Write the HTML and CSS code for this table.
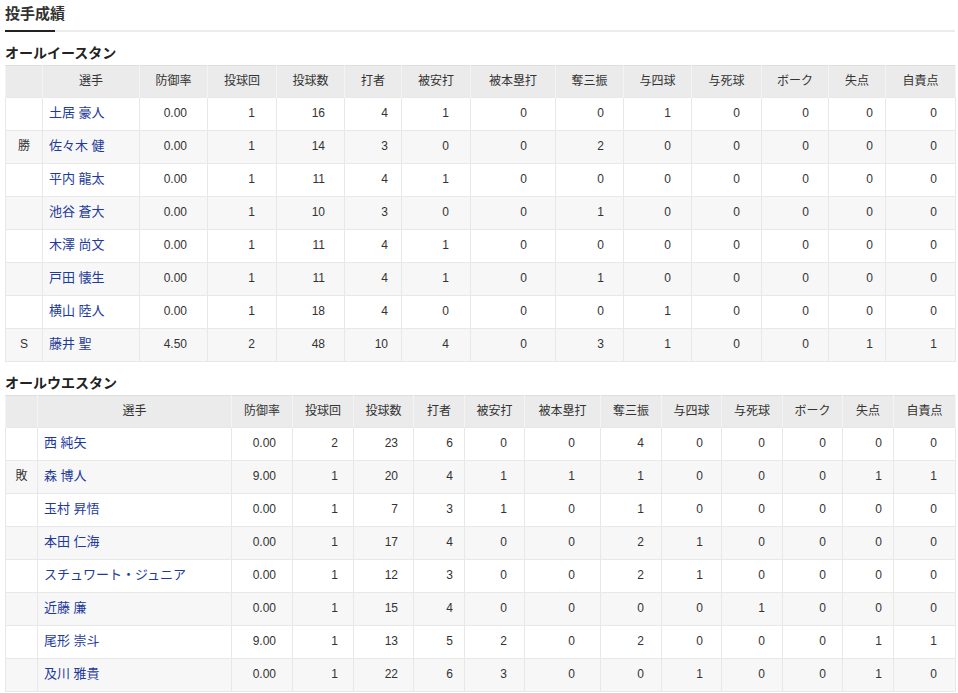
FILE: index.html
```html
<!DOCTYPE html>
<html lang="ja">
<head>
<meta charset="utf-8">
<title>投手成績</title>
<link rel="stylesheet" href="styles.css">
</head>
<body>
<div class="wrap">
  <h2 class="sec-title">投手成績</h2>

  <h3 class="team">オールイースタン</h3>
  <table class="stats t1">
    <colgroup>
      <col class="c1"><col class="c2"><col class="c3"><col class="c4"><col class="c5"><col class="c6"><col class="c7"><col class="c8"><col class="c9"><col class="c10"><col class="c11"><col class="c12"><col class="c13"><col class="c14">
    </colgroup>
    <thead>
      <tr><th></th><th>選手</th><th>防御率</th><th>投球回</th><th>投球数</th><th>打者</th><th>被安打</th><th>被本塁打</th><th>奪三振</th><th>与四球</th><th>与死球</th><th>ボーク</th><th>失点</th><th>自責点</th></tr>
    </thead>
    <tbody>
      <tr><td class="res"></td><td class="name"><a href="#">土居 豪人</a></td><td>0.00</td><td>1</td><td>16</td><td>4</td><td>1</td><td>0</td><td>0</td><td>1</td><td>0</td><td>0</td><td>0</td><td>0</td></tr>
      <tr><td class="res">勝</td><td class="name"><a href="#">佐々木 健</a></td><td>0.00</td><td>1</td><td>14</td><td>3</td><td>0</td><td>0</td><td>2</td><td>0</td><td>0</td><td>0</td><td>0</td><td>0</td></tr>
      <tr><td class="res"></td><td class="name"><a href="#">平内 龍太</a></td><td>0.00</td><td>1</td><td>11</td><td>4</td><td>1</td><td>0</td><td>0</td><td>0</td><td>0</td><td>0</td><td>0</td><td>0</td></tr>
      <tr><td class="res"></td><td class="name"><a href="#">池谷 蒼大</a></td><td>0.00</td><td>1</td><td>10</td><td>3</td><td>0</td><td>0</td><td>1</td><td>0</td><td>0</td><td>0</td><td>0</td><td>0</td></tr>
      <tr><td class="res"></td><td class="name"><a href="#">木澤 尚文</a></td><td>0.00</td><td>1</td><td>11</td><td>4</td><td>1</td><td>0</td><td>0</td><td>0</td><td>0</td><td>0</td><td>0</td><td>0</td></tr>
      <tr><td class="res"></td><td class="name"><a href="#">戸田 懐生</a></td><td>0.00</td><td>1</td><td>11</td><td>4</td><td>1</td><td>0</td><td>1</td><td>0</td><td>0</td><td>0</td><td>0</td><td>0</td></tr>
      <tr><td class="res"></td><td class="name"><a href="#">横山 陸人</a></td><td>0.00</td><td>1</td><td>18</td><td>4</td><td>0</td><td>0</td><td>0</td><td>1</td><td>0</td><td>0</td><td>0</td><td>0</td></tr>
      <tr><td class="res">S</td><td class="name"><a href="#">藤井 聖</a></td><td>4.50</td><td>2</td><td>48</td><td>10</td><td>4</td><td>0</td><td>3</td><td>1</td><td>0</td><td>0</td><td>1</td><td>1</td></tr>
    </tbody>
  </table>

  <h3 class="team">オールウエスタン</h3>
  <table class="stats t2">
    <colgroup>
      <col class="c1"><col class="c2"><col class="c3"><col class="c4"><col class="c5"><col class="c6"><col class="c7"><col class="c8"><col class="c9"><col class="c10"><col class="c11"><col class="c12"><col class="c13"><col class="c14">
    </colgroup>
    <thead>
      <tr><th></th><th>選手</th><th>防御率</th><th>投球回</th><th>投球数</th><th>打者</th><th>被安打</th><th>被本塁打</th><th>奪三振</th><th>与四球</th><th>与死球</th><th>ボーク</th><th>失点</th><th>自責点</th></tr>
    </thead>
    <tbody>
      <tr><td class="res"></td><td class="name"><a href="#">西 純矢</a></td><td>0.00</td><td>2</td><td>23</td><td>6</td><td>0</td><td>0</td><td>4</td><td>0</td><td>0</td><td>0</td><td>0</td><td>0</td></tr>
      <tr><td class="res">敗</td><td class="name"><a href="#">森 博人</a></td><td>9.00</td><td>1</td><td>20</td><td>4</td><td>1</td><td>1</td><td>1</td><td>0</td><td>0</td><td>0</td><td>1</td><td>1</td></tr>
      <tr><td class="res"></td><td class="name"><a href="#">玉村 昇悟</a></td><td>0.00</td><td>1</td><td>7</td><td>3</td><td>1</td><td>0</td><td>1</td><td>0</td><td>0</td><td>0</td><td>0</td><td>0</td></tr>
      <tr><td class="res"></td><td class="name"><a href="#">本田 仁海</a></td><td>0.00</td><td>1</td><td>17</td><td>4</td><td>0</td><td>0</td><td>2</td><td>1</td><td>0</td><td>0</td><td>0</td><td>0</td></tr>
      <tr><td class="res"></td><td class="name"><a href="#">スチュワート・ジュニア</a></td><td>0.00</td><td>1</td><td>12</td><td>3</td><td>0</td><td>0</td><td>2</td><td>1</td><td>0</td><td>0</td><td>0</td><td>0</td></tr>
      <tr><td class="res"></td><td class="name"><a href="#">近藤 廉</a></td><td>0.00</td><td>1</td><td>15</td><td>4</td><td>0</td><td>0</td><td>0</td><td>0</td><td>1</td><td>0</td><td>0</td><td>0</td></tr>
      <tr><td class="res"></td><td class="name"><a href="#">尾形 崇斗</a></td><td>9.00</td><td>1</td><td>13</td><td>5</td><td>2</td><td>0</td><td>2</td><td>0</td><td>0</td><td>0</td><td>1</td><td>1</td></tr>
      <tr><td class="res"></td><td class="name"><a href="#">及川 雅貴</a></td><td>0.00</td><td>1</td><td>22</td><td>6</td><td>3</td><td>0</td><td>0</td><td>1</td><td>0</td><td>0</td><td>1</td><td>0</td></tr>
    </tbody>
  </table>
</div>
</body>
</html>
```
FILE: styles.css
```css
html, body {
  margin: 0;
  padding: 0;
  background: #fff;
}
body {
  font-family: "Liberation Sans", "Noto Sans CJK JP", sans-serif;
  color: #333;
  font-size: 12px;
}
.wrap {
  margin: 0 3px 0 5px;
}
.sec-title {
  position: relative;
  margin: 0;
  padding: 4px 0 6px;
  font-size: 15px;
  line-height: 20px;
  font-weight: bold;
  color: #333;
  border-bottom: 2px solid #ececec;
}
.sec-title::after {
  content: "";
  position: absolute;
  left: 0;
  bottom: -2px;
  width: 50px;
  height: 2px;
  background: #222;
}
.team {
  margin: 11px 0 2px;
  font-size: 14px;
  line-height: 20px;
  font-weight: bold;
  color: #222;
}
.stats {
  width: 950px;
  table-layout: fixed;
  border-collapse: collapse;
  border: 1px solid #dedede;
  margin-bottom: 1px;
}
.stats thead tr {
  height: 32px;
}
.stats tbody tr {
  height: 33px;
}
.stats th {
  padding: 0 0 2px;
  line-height: 16px;
  background: #ebebeb;
  font-weight: normal;
  color: #333;
  text-align: center;
  border: 1px solid #dedede;
  border-left-color: #f3f3f3;
  border-right-color: #f3f3f3;
  border-bottom: none;
}
.stats td {
  padding: 0 20px 2px 0;
  line-height: 16px;
  text-align: right;
  color: #333;
  border: 1px solid #e8e8e8;
  white-space: nowrap;
}
.stats tbody tr:nth-child(even) td {
  background: #f7f7f7;
}
.stats td.res {
  text-align: center;
  padding: 0 0 3px;
}
.stats td.name {
  text-align: left;
  font-size: 13px;
  padding: 0 0 3px 6px;
}
.stats td.name a {
  color: #1d3a9c;
  text-decoration: none;
}

/* table 1 column widths */
.t1 .c1 { width: 37px; }
.t1 .c2 { width: 97px; }
.t1 .c3 { width: 68px; }
.t1 .c4 { width: 69px; }
.t1 .c5 { width: 68px; }
.t1 .c6 { width: 57px; }
.t1 .c7 { width: 69px; }
.t1 .c8 { width: 85px; }
.t1 .c9 { width: 68px; }
.t1 .c10 { width: 68px; }
.t1 .c11 { width: 70px; }
.t1 .c12 { width: 67px; }
.t1 .c13 { width: 57px; }
.t1 .c14 { width: 70px; }

/* table 2 column widths */
.t2 .c1 { width: 32px; }
.t2 .c2 { width: 194px; }
.t2 .c3 { width: 61px; }
.t2 .c4 { width: 61px; }
.t2 .c5 { width: 60px; }
.t2 .c6 { width: 51px; }
.t2 .c7 { width: 60px; }
.t2 .c8 { width: 76px; }
.t2 .c9 { width: 61px; }
.t2 .c10 { width: 60px; }
.t2 .c11 { width: 61px; }
.t2 .c12 { width: 60px; }
.t2 .c13 { width: 51px; }
.t2 .c14 { width: 62px; }

/* number alignment, table 1 */
.t1 td:nth-child(3) { padding-right: 20px; }
.t1 td:nth-child(4) { padding-right: 21px; }
.t1 td:nth-child(5) { padding-right: 19px; }
.t1 td:nth-child(6) { padding-right: 13px; }
.t1 td:nth-child(7) { padding-right: 21px; }
.t1 td:nth-child(8) { padding-right: 28px; }
.t1 td:nth-child(9) { padding-right: 19px; }
.t1 td:nth-child(10) { padding-right: 20px; }
.t1 td:nth-child(11) { padding-right: 21px; }
.t1 td:nth-child(12) { padding-right: 19px; }
.t1 td:nth-child(13) { padding-right: 12px; }
.t1 td:nth-child(14) { padding-right: 18px; }

/* number alignment, table 2 */
.t2 td:nth-child(3) { padding-right: 16px; }
.t2 td:nth-child(4) { padding-right: 15px; }
.t2 td:nth-child(5) { padding-right: 15px; }
.t2 td:nth-child(6) { padding-right: 11px; }
.t2 td:nth-child(7) { padding-right: 17px; }
.t2 td:nth-child(8) { padding-right: 25px; }
.t2 td:nth-child(9) { padding-right: 17px; }
.t2 td:nth-child(10) { padding-right: 18px; }
.t2 td:nth-child(11) { padding-right: 17px; }
.t2 td:nth-child(12) { padding-right: 16px; }
.t2 td:nth-child(13) { padding-right: 11px; }
.t2 td:nth-child(14) { padding-right: 18px; }
```
